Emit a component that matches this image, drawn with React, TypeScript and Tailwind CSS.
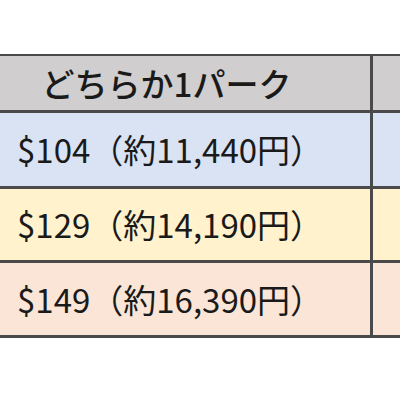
const rows = [
  { price: '$104', yen: '約11,440円', bg: 'bg-[#dae3f3]' },
  { price: '$129', yen: '約14,190円', bg: 'bg-[#fff2cc]' },
  { price: '$149', yen: '約16,390円', bg: 'bg-[#fbe5d6]' },
];

export default function App() {
  return (
    <div className="w-[400px] h-[400px] overflow-hidden bg-white pt-[54px] text-[#1a1a1a] font-['Noto_Sans_CJK_JP',sans-serif]">
      <div className="ml-[-37px] w-[480px] border-t-2 border-[#4a4a4a]">
        {/* header */}
        <div className="grid grid-cols-[410px_70px] h-[57px] border-b-[3px] border-[#4a4a4a] bg-[#d0cece]">
          <div className="flex items-center justify-center border-r-[3px] border-[#4a4a4a] text-[33px] leading-none font-medium">
            どちらか1パーク
          </div>
          <div />
        </div>

        {rows.map((r, i) => (
          <div
            key={r.price}
            className={`grid grid-cols-[410px_70px] border-b-[3px] border-[#4a4a4a] ${r.bg} ${
              i === 0 ? 'h-[76px]' : i === 1 ? 'h-[74px]' : 'h-[75px]'
            }`}
          >
            <div className="flex items-center pl-[54px] border-r-[3px] border-[#4a4a4a] text-[33px] leading-none whitespace-nowrap">
              {r.price}（{r.yen}）
            </div>
            <div />
          </div>
        ))}
      </div>
    </div>
  );
}
